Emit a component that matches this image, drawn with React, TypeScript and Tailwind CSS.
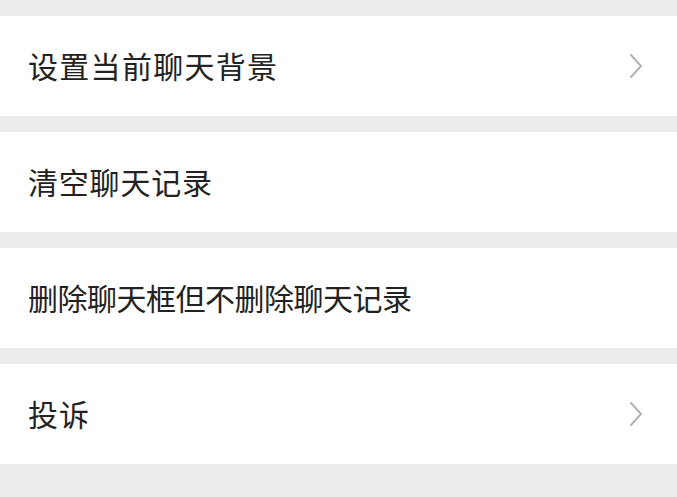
import React from 'react';

type Item = { label: string; arrow: boolean; tracking: string };

const items: Item[] = [
  { label: '设置当前聊天背景', arrow: true, tracking: 'tracking-[1.3px]' },
  { label: '清空聊天记录', arrow: false, tracking: 'tracking-[0.8px]' },
  { label: '删除聊天框但不删除聊天记录', arrow: false, tracking: 'tracking-[-0.5px]' },
  { label: '投诉', arrow: true, tracking: 'tracking-[1px]' },
];

const Chevron: React.FC = () => (
  <svg width="14" height="26" viewBox="0 0 14 26" fill="none">
    <path d="M2 2 L12 13 L2 24" stroke="#b3b3b3" strokeWidth="2" strokeLinecap="round" strokeLinejoin="round" />
  </svg>
);

const App: React.FC = () => {
  return (
    <div
      className="w-[677px] h-[497px] bg-[#ededed] pt-4 flex flex-col gap-4 overflow-hidden"
      style={{ fontFamily: '"Noto Sans CJK SC", "Noto Sans", sans-serif' }}
    >
      {items.map((item) => (
        <div key={item.label} className="h-[100px] bg-white flex items-center justify-between pl-[28px] pr-[34px]">
          <span className={`text-[30px] text-[#222] leading-none pb-[2px] ${item.tracking}`}>{item.label}</span>
          {item.arrow && <Chevron />}
        </div>
      ))}
    </div>
  );
};

export default App;
